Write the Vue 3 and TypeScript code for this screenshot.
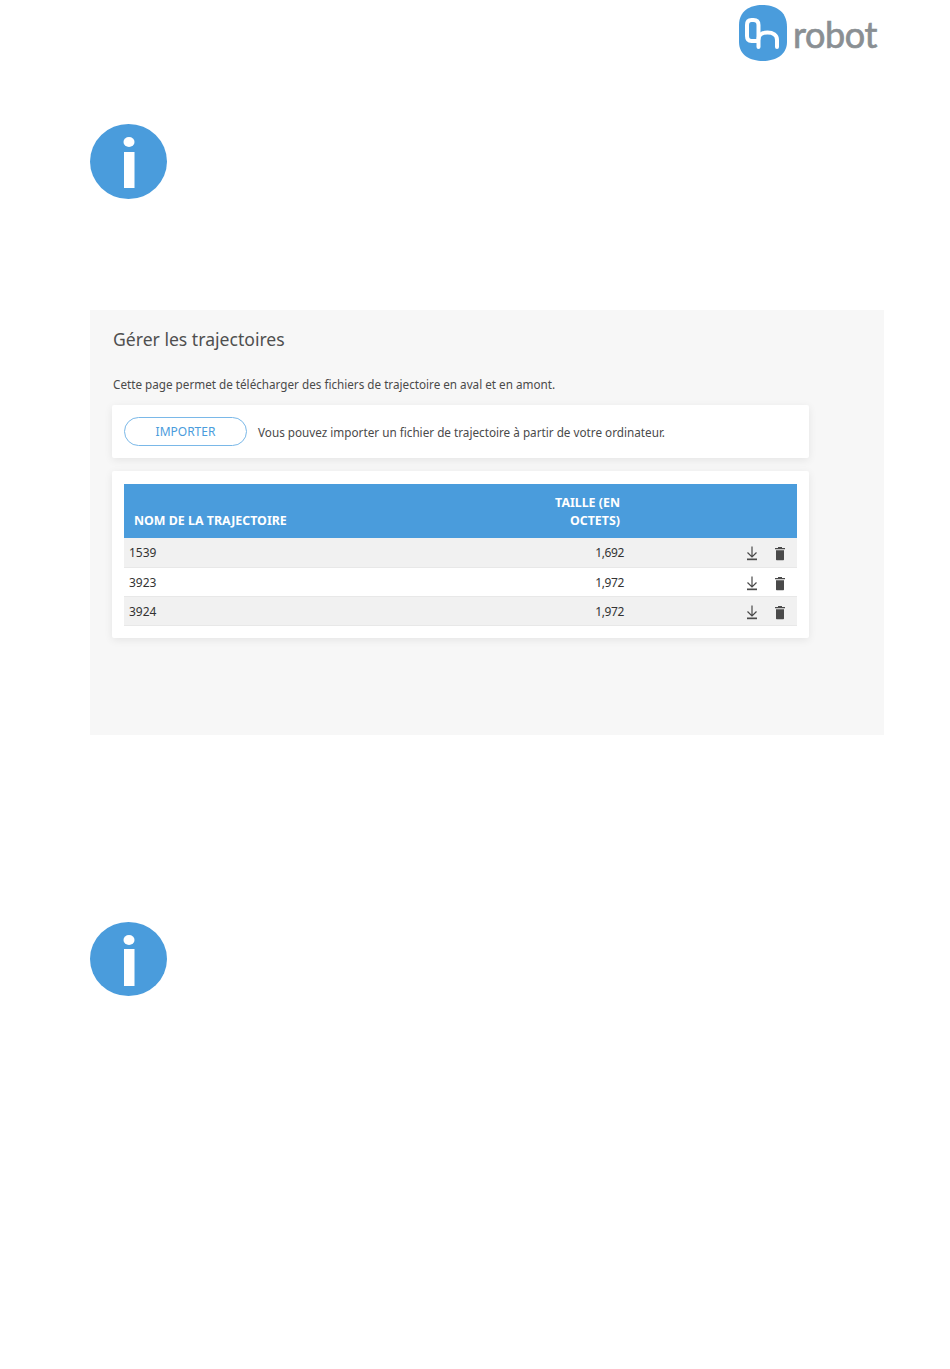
<script setup lang="ts">
interface Trajectory {
  name: string
  size: string
}

const trajectories: Trajectory[] = [
  { name: '1539', size: '1,692' },
  { name: '3923', size: '1,972' },
  { name: '3924', size: '1,972' },
]
</script>

<template>
  <div class="page">
    <header class="page-header">
      <div class="logo">
        <svg class="logo-mark" width="50" height="56" viewBox="0 0 50 56">
          <path d="M24 0C36 0 49 5 49 22V37C49 50 37 56 25 56C12 56 1 50 1 37V20C1 6 12 0 24 0Z" fill="#4a9cdc" />
          <path d="M20 36H13.500C10.500 36 9 34 9 31V20C9 16.500 10.500 15 13.500 15H15.500C18.500 15 20.500 16.500 20.500 20V42" fill="none" stroke="#fff" stroke-width="4" stroke-linecap="round" />
          <path d="M20.500 34C20.500 30 24 27.500 29.500 27.500C35 27.500 39 30 39 35V42" fill="none" stroke="#fff" stroke-width="4" stroke-linecap="round" />
        </svg>
        <span class="logo-word">robot</span>
      </div>
    </header>

    <svg class="info-icon" width="77" height="75" viewBox="0 0 77 75">
      <ellipse cx="38.500" cy="37.500" rx="38.500" ry="37.500" fill="#4a9cdc" />
      <ellipse cx="39" cy="18" rx="5.500" ry="5" fill="#fff" />
      <rect x="34" y="28" width="10.500" height="36" fill="#fff" />
    </svg>

    <section class="panel">
      <h2 class="panel-title">Gérer les trajectoires</h2>
      <p class="panel-intro">Cette page permet de télécharger des fichiers de trajectoire en aval et en amont.</p>

      <div class="card import-card">
        <button class="import-btn" type="button">IMPORTER</button>
        <span class="import-hint">Vous pouvez importer un fichier de trajectoire à partir de votre ordinateur.</span>
      </div>

      <div class="card table-card">
        <table class="traj-table">
          <colgroup>
            <col class="col-name">
            <col class="col-size">
            <col>
          </colgroup>
          <thead>
            <tr>
              <th class="th-name">NOM DE LA TRAJECTOIRE</th>
              <th class="th-size">TAILLE (EN OCTETS)</th>
              <th />
            </tr>
          </thead>
          <tbody>
            <tr v-for="t in trajectories" :key="t.name">
              <td>{{ t.name }}</td>
              <td class="td-size">{{ t.size }}</td>
              <td class="td-actions">
                <svg class="action" width="14" height="15" viewBox="0 0 14 15">
                  <path d="M7 0.500V10.500M2.500 6.500L7 11L11.500 6.500" fill="none" stroke="#4a4a4a" stroke-width="1.200" />
                  <rect x="2" y="12.500" width="10" height="1.700" fill="#4a4a4a" />
                </svg>
                <svg class="action" width="12" height="15" viewBox="0 0 12 15">
                  <path d="M1 2H4V1H8V2H11V3.200H1Z" fill="#4a4a4a" />
                  <path d="M2 4.200H10V13.500C10 13.900 9.700 14.200 9.300 14.200H2.700C2.300 14.200 2 13.900 2 13.500Z" fill="#4a4a4a" />
                </svg>
              </td>
            </tr>
          </tbody>
        </table>
      </div>
    </section>

    <svg class="info-icon info-second" width="77" height="75" viewBox="0 0 77 75">
      <ellipse cx="38.500" cy="37" rx="38.500" ry="37" fill="#4a9cdc" />
      <ellipse cx="39" cy="18" rx="5.500" ry="5" fill="#fff" />
      <rect x="34" y="27" width="10.500" height="37" fill="#fff" />
    </svg>
  </div>
</template>

<style>
html,
body {
  background: #fff;
}
</style>

<style scoped>
.page {
  box-sizing: border-box;
  width: 950px;
  height: 1369px;
  padding: 5px 66px 0 90px;
  font-family: "Noto Sans", "Open Sans", sans-serif;
  color: #4a4a4a;
  overflow: hidden;
}

.page-header {
  display: flex;
  justify-content: flex-end;
  padding-right: 7px;
}

.logo {
  display: flex;
  align-items: flex-start;
  gap: 5px;
  height: 56px;
}

.logo-mark {
  display: block;
}

.logo-word {
  width: 84px;
  font-family: Lato, sans-serif;
  font-size: 36px;
  line-height: 58px;
  font-weight: 400;
  color: #8a8f93;
  letter-spacing: -0.4px;
  -webkit-text-stroke: 0.7px #8a8f93;
}

.info-icon {
  display: block;
  margin-top: 63px;
}

.info-second {
  margin-top: 187px;
}

.panel {
  box-sizing: border-box;
  width: 794px;
  height: 425px;
  margin-top: 111px;
  padding: 17px 75px 0 22px;
  background: #f7f7f7;
}

.panel-title {
  margin: 0 0 0 1px;
  font-size: 17.600px;
  line-height: 24px;
  font-weight: 400;
  color: #4f4f4f;
}

.panel-intro {
  margin: 25px 0 0 1px;
  font-size: 11.700px;
  line-height: 16px;
  color: #4a4a4a;
}

.card {
  box-sizing: border-box;
  background: #fff;
  border-radius: 2px;
  box-shadow: 0 2px 8px rgba(0, 0, 0, 0.08);
}

.import-card {
  display: flex;
  align-items: center;
  gap: 11px;
  height: 53px;
  margin-top: 13px;
  padding: 0 12px;
}

.import-btn {
  flex: none;
  width: 123px;
  height: 29px;
  padding: 0;
  border: 1px solid #7ab8e8;
  border-radius: 15px;
  background: #fff;
  color: #4a9cdc;
  font-family: inherit;
  font-size: 12px;
}

.import-hint {
  font-size: 11.730px;
}

.table-card {
  height: 167px;
  margin-top: 13px;
  padding: 13px 12px 0;
}

.traj-table {
  width: 673px;
  table-layout: fixed;
  border-collapse: collapse;
}

.col-name {
  width: 422px;
}

.col-size {
  width: 83px;
}

thead tr {
  height: 54px;
  background: #4a9cdc;
}

th {
  padding: 0 9px 8px 10px;
  vertical-align: bottom;
  color: #fff;
  font-size: 12.400px;
  line-height: 18px;
  font-weight: 700;
}

.th-name {
  text-align: left;
}

.th-size {
  padding-left: 0;
  text-align: right;
}

tbody tr {
  height: 29px;
  border-bottom: 1px solid #e8e8e8;
}

tbody tr:nth-child(odd) {
  background: #f1f1f1;
}

td {
  padding: 2px 5px 0;
  font-size: 12px;
  line-height: 16px;
  color: #333;
}

.td-size {
  letter-spacing: -0.4px;
  text-align: right;
}

.td-actions {
  padding-right: 11px;
  text-align: right;
}

.action {
  margin-left: 15px;
  vertical-align: middle;
}
</style>
